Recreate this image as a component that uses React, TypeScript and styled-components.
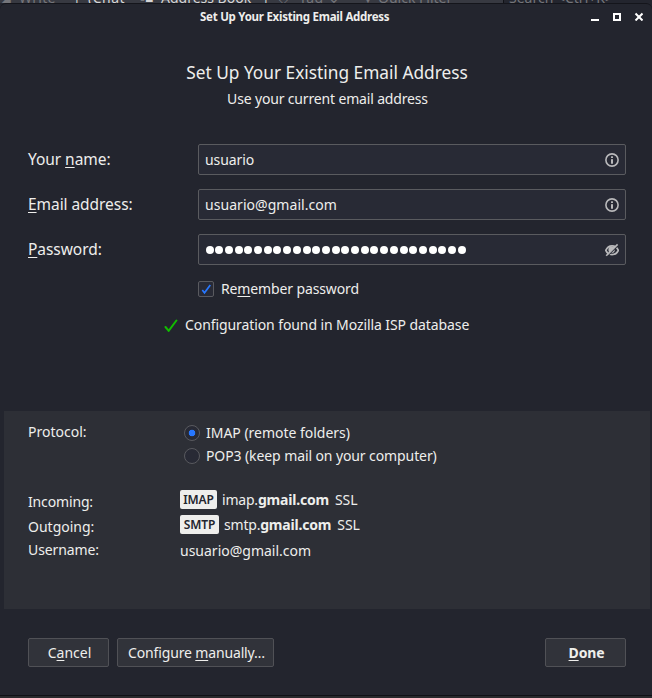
import React from "react";
import styled, { createGlobalStyle } from "styled-components";

const GlobalStyle = createGlobalStyle`
  * { box-sizing: border-box; }
  body {
    margin: 0;
    background: #23252e;
    color: #eeeeec;
    font-family: "Noto Sans", sans-serif;
    font-size: 14px;
    line-height: 20px;
  }
`;

const Screen = styled.div`
  width: 652px;
  height: 698px;
  display: flex;
  flex-direction: column;
  overflow: hidden;
`;

const ParentToolbar = styled.div`
  height: 3px;
  flex: none;
  display: flex;
  overflow: hidden;
  background: #373941;
  white-space: nowrap;
`;

const ParentItem = styled.span<{ $width: number; $bright?: boolean; $spacing?: number }>`
  flex: none;
  width: ${(p) => p.$width}px;
  height: 20px;
  margin-top: -12px;
  letter-spacing: ${(p) => p.$spacing ?? 0}px;
  color: ${(p) => (p.$bright ? "#d5d5d6" : "#74757a")};
`;

const ParentSearch = styled(ParentItem)`
  background: #23252e;
  border-left: 1px solid #111217;
  padding-left: 5px;
`;

const Dialog = styled.main`
  flex: none;
  height: 693px;
  display: flex;
  flex-direction: column;
  background: #23252e;
  border-top: 1px solid #14151b;
  border-bottom: 1px solid #101116;
  border-radius: 6px 6px 0 0;
`;

const ParentFooter = styled.div`
  flex: 1;
  background: #292a2d;
`;

const TitleBar = styled.header`
  height: 26px;
  display: grid;
  grid-template-columns: 200px 190px 1fr;
  align-items: center;
`;

const WindowTitle = styled.div`
  grid-column: 2;
  font-size: 11.5px;
  font-weight: 700;
  line-height: 26px;
  white-space: nowrap;
  letter-spacing: -0.26px;
`;

const WindowControls = styled.div`
  display: flex;
  justify-content: flex-end;
  gap: 13px;
  padding: 0 9px 1px 0;
`;

const ControlIcon = styled.svg`
  width: 9px;
  height: 9px;
  display: block;
`;

const Heading = styled.h1`
  margin: 31px 0 0;
  padding-left: 2px;
  height: 24px;
  text-align: center;
  font-size: 17.3px;
  font-weight: 400;
  line-height: 24px;
`;

const Subheading = styled.p`
  margin: 4px 0 0;
  padding-left: 3px;
  text-align: center;
  line-height: 20px;
`;

const Form = styled.form`
  margin: 35px 26px 0 28px;
  display: flex;
  flex-direction: column;
  gap: 14px;
`;

const FieldRow = styled.div`
  display: grid;
  grid-template-columns: 170px 1fr;
  align-items: center;
  height: 31px;
`;

const FieldLabel = styled.label`
  padding-bottom: 2px;
  font-size: 15.5px;
  line-height: 22px;
  letter-spacing: -0.06px;
`;

const AccessKey = styled.u`
  text-decoration-thickness: 1px;
  text-underline-offset: 2px;
  text-decoration-skip-ink: none;
`;

const Field = styled.div`
  display: flex;
  align-items: center;
  justify-content: space-between;
  height: 31px;
  padding: 0 6px;
  background: #282a35;
  border: 1px solid #5a5b5f;
  border-radius: 2px;
`;

const Label = styled.span<{ $spacing?: number }>`
  letter-spacing: ${(p) => p.$spacing ?? 0}px;
  white-space: nowrap;
`;

const FieldIcon = styled.svg`
  width: 14px;
  height: 14px;
  margin-top: 1px;
  display: block;
  color: #b9b9bb;
`;

const PasswordDots = styled.div`
  display: flex;
  gap: 1.71px;
  padding-left: 0.5px;
`;

const Dot = styled.span`
  width: 8px;
  height: 8px;
  border-radius: 50%;
  background: #ffffff;
`;

const RememberRow = styled.label`
  display: flex;
  align-items: center;
  gap: 7px;
  margin: 14px 0 0 198px;
  height: 20px;
`;

const CheckBox = styled.span`
  width: 16px;
  height: 16px;
  background: #282a35;
  border: 1px solid #595a5f;
  border-radius: 2px;
`;

const CheckIcon = styled.svg`
  display: block;
`;

const Status = styled.div`
  display: flex;
  align-items: center;
  gap: 7px;
  height: 20px;
  margin: 16px 0 0 164px;
`;

const Results = styled.section`
  flex: none;
  height: 198px;
  margin: 76px 2px 0 4px;
  padding: 12px 24px 0;
  background: #2d2f36;
`;

const ProtocolGroup = styled.div`
  display: grid;
  grid-template-columns: 156px 1fr;
`;

const ProtocolLabel = styled.span`
  line-height: 18px;
`;

const ProtocolOptions = styled.div`
  display: flex;
  flex-direction: column;
  gap: 3px;
`;

const RadioRow = styled.label`
  display: flex;
  align-items: center;
  gap: 6px;
  height: 20px;
`;

const Radio = styled.span<{ $checked?: boolean }>`
  width: 16px;
  height: 16px;
  flex: none;
  border-radius: 50%;
  border: 1px solid #595a5f;
  background: ${(p) => (p.$checked ? "radial-gradient(circle, #2777ff 3.1px, #282a35 3.6px)" : "#282a35")};
`;

const ServerRows = styled.div`
  display: flex;
  flex-direction: column;
  margin-top: 24px;
`;

const ServerRow = styled.div`
  display: grid;
  grid-template-columns: 152px 1fr;
  height: 25px;
`;

const ServerName = styled(Label)`
  padding-top: 2px;
`;

const ServerValue = styled.div`
  display: flex;
  align-items: flex-start;
`;

const Badge = styled.span<{ $width: number }>`
  width: ${(p) => p.$width}px;
  height: 19px;
  border-radius: 2px;
  background: #eeeeec;
  color: #23252e;
  font-size: 12px;
  font-weight: 600;
  line-height: 19px;
  text-align: center;
  letter-spacing: -0.1px;
  margin-right: 5px;
`;

const Host = styled(Label)`
  b { font-weight: 700; }
`;

const Security = styled(Label)`
  margin-left: 6px;
`;

const UserName = styled(Label)`
  padding-top: 1px;
`;

const Actions = styled.footer`
  display: flex;
  gap: 8px;
  margin: 29px 26px 0 28px;
`;

const Button = styled.button<{ $width: number; $primary?: boolean; $spacing?: number }>`
  width: ${(p) => p.$width}px;
  height: 29px;
  padding: 1px 0 0 2px;
  margin-left: ${(p) => (p.$primary ? "auto" : "0")};
  border: 1px solid #505156;
  border-radius: 2px;
  background: #31333a;
  color: #eeeeec;
  font: inherit;
  font-weight: ${(p) => (p.$primary ? 700 : 400)};
  letter-spacing: ${(p) => p.$spacing ?? 0}px;
  white-space: nowrap;
`;

const InfoIcon = () => (
  <FieldIcon viewBox="0 0 14 14" fill="none">
    <circle cx="7" cy="7" r="6.1" stroke="currentColor" strokeWidth="1.6" />
    <rect x="6" y="3.2" width="2" height="1.9" rx=".5" fill="currentColor" />
    <rect x="6" y="6" width="2" height="4.8" rx=".4" fill="currentColor" />
  </FieldIcon>
);

const HiddenIcon = () => (
  <FieldIcon viewBox="0 0 14 14" fill="none">
    <path d="M.8 7.4C2.1 4.2 4.5 2.8 7.1 2.8S12 4.2 13.3 7.4C12 10.3 9.7 11.6 7 11.6S2.1 10.3 .8 7.4Z" stroke="currentColor" strokeWidth="1.7" />
    <circle cx="6.6" cy="6.7" r="3.2" fill="currentColor" />
    <path d="M2 13.5L13.4 2.1" stroke="#282a35" strokeWidth="1.3" />
    <path d="M1.2 12.8L12.6 1.4" stroke="currentColor" strokeWidth="1.6" />
  </FieldIcon>
);

export default function App() {
  return (
    <>
      <GlobalStyle />
      <Screen>
        <ParentToolbar>
          <ParentItem $width={19}>◢</ParentItem>
          <ParentItem $width={54} $spacing={0.3}>Write</ParentItem>
          <ParentItem $width={15} $bright>|</ParentItem>
          <ParentItem $width={52} $bright $spacing={0.5}>(Chat</ParentItem>
          <ParentItem $width={21} $bright>▪■</ParentItem>
          <ParentItem $width={101} $bright>Address Book</ParentItem>
          <ParentItem $width={16} $bright>|</ParentItem>
          <ParentItem $width={21}>◇</ParentItem>
          <ParentItem $width={62} $spacing={0.5}>Tag ⌄</ParentItem>
          <ParentItem $width={17}>▼</ParentItem>
          <ParentItem $width={125}>Quick Filter</ParentItem>
          <ParentSearch $width={149}>Search &lt;Ctrl+K&gt;</ParentSearch>
        </ParentToolbar>
        <Dialog>
          <TitleBar>
            <WindowTitle>Set Up Your Existing Email Address</WindowTitle>
            <WindowControls>
              <ControlIcon viewBox="0 0 9 9"><path d="M1 7h8v2H1z" fill="#fff" /></ControlIcon>
              <ControlIcon viewBox="0 0 9 9"><path d="M2 2h6v6H2z" fill="none" stroke="#fff" strokeWidth="2" /></ControlIcon>
              <ControlIcon viewBox="0 0 9 9"><path d="M1.5 1.5l7 7M8.5 1.5l-7 7" fill="none" stroke="#fff" strokeWidth="2" /></ControlIcon>
            </WindowControls>
          </TitleBar>
          <Heading>Set Up Your Existing Email Address</Heading>
          <Subheading><Label $spacing={-0.16}>Use your current email address</Label></Subheading>
          <Form>
            <FieldRow>
              <FieldLabel>Your <AccessKey>n</AccessKey>ame:</FieldLabel>
              <Field><Label $spacing={-0.1}>usuario</Label><InfoIcon /></Field>
            </FieldRow>
            <FieldRow>
              <FieldLabel><AccessKey>E</AccessKey>mail address:</FieldLabel>
              <Field><Label $spacing={0.05}>usuario@gmail.com</Label><InfoIcon /></Field>
            </FieldRow>
            <FieldRow>
              <FieldLabel><AccessKey>P</AccessKey>assword:</FieldLabel>
              <Field>
                <PasswordDots>
                  {Array.from({ length: 27 }, (_, i) => <Dot key={i} />)}
                </PasswordDots>
                <HiddenIcon />
              </Field>
            </FieldRow>
          </Form>
          <RememberRow>
            <CheckBox>
              <CheckIcon width="14" height="14" viewBox="0 0 14 14"><path d="M3.3 8l2.2 2.8L11.3 3" fill="none" stroke="#2777ff" strokeWidth="1.7" /></CheckIcon>
            </CheckBox>
            <Label $spacing={-0.13}>Re<AccessKey>m</AccessKey>ember password</Label>
          </RememberRow>
          <Status>
            <CheckIcon width="14" height="14" viewBox="0 0 14 14"><path d="M1.5 9l3.2 3.8L12.4 2.5" fill="none" stroke="#12bc00" strokeWidth="2" strokeLinecap="round" /></CheckIcon>
            <Label $spacing={-0.09}>Configuration found in Mozilla ISP database</Label>
          </Status>
          <Results>
            <ProtocolGroup>
              <ProtocolLabel>Protocol:</ProtocolLabel>
              <ProtocolOptions>
                <RadioRow><Radio $checked /><Label $spacing={-0.02}>IMAP (remote folders)</Label></RadioRow>
                <RadioRow><Radio /><Label $spacing={-0.1}>POP3 (keep mail on your computer)</Label></RadioRow>
              </ProtocolOptions>
            </ProtocolGroup>
            <ServerRows>
              <ServerRow>
                <ServerName $spacing={-0.15}>Incoming:</ServerName>
                <ServerValue><Badge $width={37}>IMAP</Badge><Host $spacing={-0.2}>imap.<b>gmail.com</b></Host><Security>SSL</Security></ServerValue>
              </ServerRow>
              <ServerRow>
                <ServerName>Outgoing:</ServerName>
                <ServerValue><Badge $width={39}>SMTP</Badge><Host $spacing={-0.2}>smtp.<b>gmail.com</b></Host><Security>SSL</Security></ServerValue>
              </ServerRow>
              <ServerRow>
                <Label $spacing={-0.1}>Username:</Label>
                <UserName>usuario@gmail.com</UserName>
              </ServerRow>
            </ServerRows>
          </Results>
          <Actions>
            <Button $width={81}>C<AccessKey>a</AccessKey>ncel</Button>
            <Button $width={157} $spacing={-0.15}>Configure <AccessKey>m</AccessKey>anually…</Button>
            <Button $width={81} $primary $spacing={-0.15}><AccessKey>D</AccessKey>one</Button>
          </Actions>
        </Dialog>
        <ParentFooter />
      </Screen>
    </>
  );
}
